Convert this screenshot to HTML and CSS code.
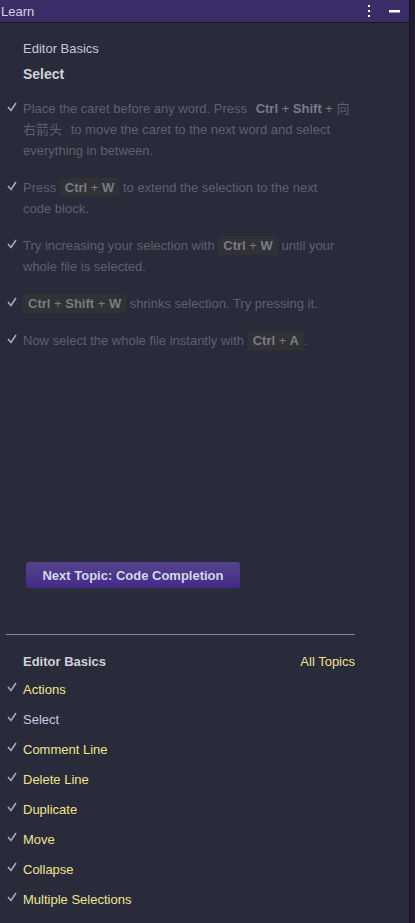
FILE: index.html
```html
<!DOCTYPE html>
<html lang="en">
<head>
    <meta charset="UTF-8">
    <meta name="viewport" content="width=device-width, initial-scale=1.0">
    <title>Learn</title>
    <link rel="stylesheet" href="styles.css">
</head>
<body>
    <div class="window">
        <div class="panel">
            <div class="header">
                <span class="title">Learn</span>
                <div class="header-icons">
                    <svg width="4" height="12" viewBox="0 0 4 12"><rect x="1" y="0" width="2" height="2" fill="#fff"/><rect x="1" y="5" width="2" height="2" fill="#fff"/><rect x="1" y="10" width="2" height="2" fill="#fff"/></svg>
                    <svg width="11" height="4" viewBox="0 0 11 4"><rect x="0" y="1" width="11" height="2.5" fill="#fff"/></svg>
                </div>
            </div>

            <div class="lesson">
                <div class="crumb">Editor Basics</div>
                <div class="lesson-title">Select</div>

                <ul class="steps">
                    <li>
                        <svg class="check" viewBox="0 0 10 10"><polyline points="1,5 4,8.5 9,1" /></svg>
                        <p>Place the caret before any word. Press <kbd>Ctrl <i>+</i> Shift <i>+</i> <span class="cjk">向右箭头</span></kbd> to move the caret to the next word and select everything in between.</p>
                    </li>
                    <li>
                        <svg class="check" viewBox="0 0 10 10"><polyline points="1,5 4,8.5 9,1" /></svg>
                        <p>Press <kbd class="key">Ctrl <i>+</i> W</kbd> to extend the selection to the next<br>code block.</p>
                    </li>
                    <li>
                        <svg class="check" viewBox="0 0 10 10"><polyline points="1,5 4,8.5 9,1" /></svg>
                        <p>Try increasing your selection with <kbd class="key">Ctrl <i>+</i> W</kbd> until your whole file is selected.</p>
                    </li>
                    <li>
                        <svg class="check" viewBox="0 0 10 10"><polyline points="1,5 4,8.5 9,1" /></svg>
                        <p><kbd class="key">Ctrl <i>+</i> Shift <i>+</i> W</kbd> shrinks selection. Try pressing it.</p>
                    </li>
                    <li>
                        <svg class="check" viewBox="0 0 10 10"><polyline points="1,5 4,8.5 9,1" /></svg>
                        <p>Now select the whole file instantly with <kbd class="key">Ctrl <i>+</i> A</kbd>.</p>
                    </li>
                </ul>

                <button class="next-btn">Next Topic: Code Completion</button>
            </div>

            <hr class="divider">

            <div class="topics">
                <div class="topics-head">
                    <span class="topics-title">Editor Basics</span>
                    <span class="all-topics">All Topics</span>
                </div>
                <ul class="topic-list">
                    <li><svg class="check" viewBox="0 0 10 10"><polyline points="1,5 4,8.5 9,1" /></svg>Actions</li>
                    <li class="current"><svg class="check" viewBox="0 0 10 10"><polyline points="1,5 4,8.5 9,1" /></svg>Select</li>
                    <li><svg class="check" viewBox="0 0 10 10"><polyline points="1,5 4,8.5 9,1" /></svg>Comment Line</li>
                    <li><svg class="check" viewBox="0 0 10 10"><polyline points="1,5 4,8.5 9,1" /></svg>Delete Line</li>
                    <li><svg class="check" viewBox="0 0 10 10"><polyline points="1,5 4,8.5 9,1" /></svg>Duplicate</li>
                    <li><svg class="check" viewBox="0 0 10 10"><polyline points="1,5 4,8.5 9,1" /></svg>Move</li>
                    <li><svg class="check" viewBox="0 0 10 10"><polyline points="1,5 4,8.5 9,1" /></svg>Collapse</li>
                    <li><svg class="check" viewBox="0 0 10 10"><polyline points="1,5 4,8.5 9,1" /></svg>Multiple Selections</li>
                </ul>
            </div>
        </div>
        <div class="edge"></div>
    </div>
</body>
</html>
```

FILE: styles.css
```css
body {
    margin: 0;
    padding: 0;
    background-color: #292a3a;
    font-family: "Liberation Sans", Arial, "Noto Sans CJK SC", sans-serif;
    font-size: 13px;
}
.window {
    display: flex;
    min-height: 923px;
}
.panel {
    width: 410px;
    background-color: #292a3a;
}
.edge {
    width: 5px;
    background-color: #221a33;
    border-left: 1px solid #16101f;
}
.header {
    height: 22px;
    background-color: #3b2d67;
    border-bottom: 1px solid #1c1828;
    display: flex;
    align-items: center;
    justify-content: space-between;
    padding: 0 9px 0 1px;
}
.title {
    color: #d4d3e0;
    font-size: 13px;
}
.header-icons {
    display: flex;
    align-items: center;
    gap: 18px;
}
.lesson {
    padding: 17px 54px 0 7px;
}
.crumb {
    color: #c9c9d2;
    line-height: 16px;
    margin: 1px 0 0 16px;
}
.lesson-title {
    color: #d2d2da;
    font-weight: bold;
    font-size: 14px;
    line-height: 18px;
    margin: 8px 0 0 16px;
}
.steps {
    list-style: none;
    margin: 15px 0 0 0;
    padding: 0;
}
.steps li {
    display: flex;
    margin-bottom: 16px;
}
.steps p {
    margin: 0;
    color: #60606d;
    line-height: 21px;
}
.check {
    width: 10px;
    height: 10px;
    flex: none;
    margin: 4px 6px 0 0;
    fill: none;
    stroke: #a8a8b8;
    stroke-width: 1.6;
}
kbd {
    font-family: inherit;
    font-weight: bold;
    color: #7b7b86;
    padding: 2px 5px;
    line-height: 1;
}
kbd.key {
    background-color: #303236;
}
kbd i {
    font-style: normal;
    font-weight: normal;
}
kbd .cjk {
    font-weight: normal;
    color: #60606d;
}
.next-btn {
    display: block;
    margin: 211px 0 0 19px;
    width: 214px;
    height: 26px;
    border: none;
    border-radius: 3px;
    background: linear-gradient(#55448c, #432a88);
    color: #d6d6e6;
    font-family: inherit;
    font-weight: bold;
    font-size: 13px;
    padding: 0;
}
.divider {
    margin: 46px 54px 0 6px;
    border: none;
    border-top: 1px solid #8b8b8f;
}
.topics {
    padding: 18px 54px 0 7px;
}
.topics-head {
    display: flex;
    justify-content: space-between;
    padding-left: 16px;
    line-height: 18px;
}
.topics-title {
    color: #d0d0da;
    font-weight: bold;
}
.all-topics {
    color: #efe48e;
}
.topic-list {
    list-style: none;
    margin: 3px 0 0 0;
    padding: 0;
}
.topic-list li {
    display: flex;
    align-items: center;
    height: 30px;
    color: #efe48e;
}
.topic-list li .check {
    margin: -4px 6px 0 0;
}
.topic-list li.current {
    color: #c8cce6;
}
```
